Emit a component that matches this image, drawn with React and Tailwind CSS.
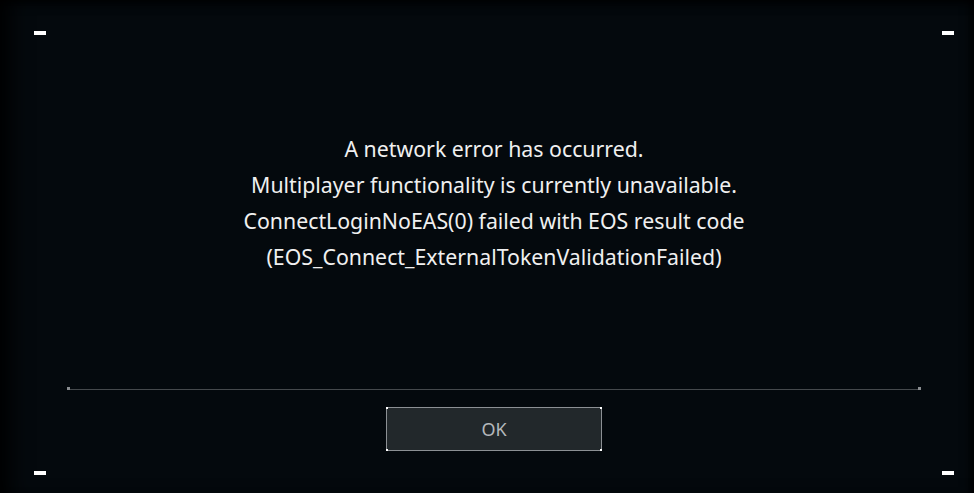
import React from 'react';

const Mark = () => <div className="w-[12px] h-[4px] bg-white" />;

const Dot = ({ className }) => (
  <span className={`absolute w-[2px] h-[2px] bg-white ${className}`} />
);

export default function App() {
  const lines = [
    'A network error has occurred.',
    'Multiplayer functionality is currently unavailable.',
    'ConnectLoginNoEAS(0) failed with EOS result code',
    '(EOS_Connect_ExternalTokenValidationFailed)',
  ];

  return (
    <div
      className="flex flex-col w-[974px] h-[493px] overflow-hidden pl-[34px] pr-[20px] pt-[31px] pb-[18px] bg-[#04090d] shadow-[inset_22px_0_22px_-12px_#000,inset_0_10px_12px_-8px_#000,inset_-10px_0_12px_-8px_#000]"
      style={{ fontFamily: '"Noto Sans", "Lato", sans-serif' }}
    >
      <div className="flex justify-between">
        <Mark />
        <Mark />
      </div>

      <div className="flex-1 flex flex-col items-center">
        <div className="mt-[96px] text-center text-[21.3px] leading-[36px] text-[#f0f0f0]">
          {lines.map((l) => (
            <div key={l}>{l}</div>
          ))}
        </div>

        {/* divider with end caps */}
        <div className="mt-[112px] mx-[33px] self-stretch flex items-end h-[3px]">
          <div className="w-[3px] h-[3px] bg-[#8a8d90]" />
          <div className="flex-1 h-[1px] bg-[#45494c]" />
          <div className="w-[3px] h-[3px] bg-[#8a8d90]" />
        </div>

        <button className="relative mt-[17px] w-[216px] h-[44px] bg-[#22282b] border border-[#8c9094] text-[#b4b8bb] text-[18px]">
          OK
          <Dot className="left-[-1px] top-[-1px]" />
          <Dot className="right-[-1px] top-[-1px]" />
          <Dot className="left-[-1px] bottom-[-1px]" />
          <Dot className="right-[-1px] bottom-[-1px]" />
        </button>
      </div>

      <div className="flex justify-between">
        <Mark />
        <Mark />
      </div>
    </div>
  );
}
